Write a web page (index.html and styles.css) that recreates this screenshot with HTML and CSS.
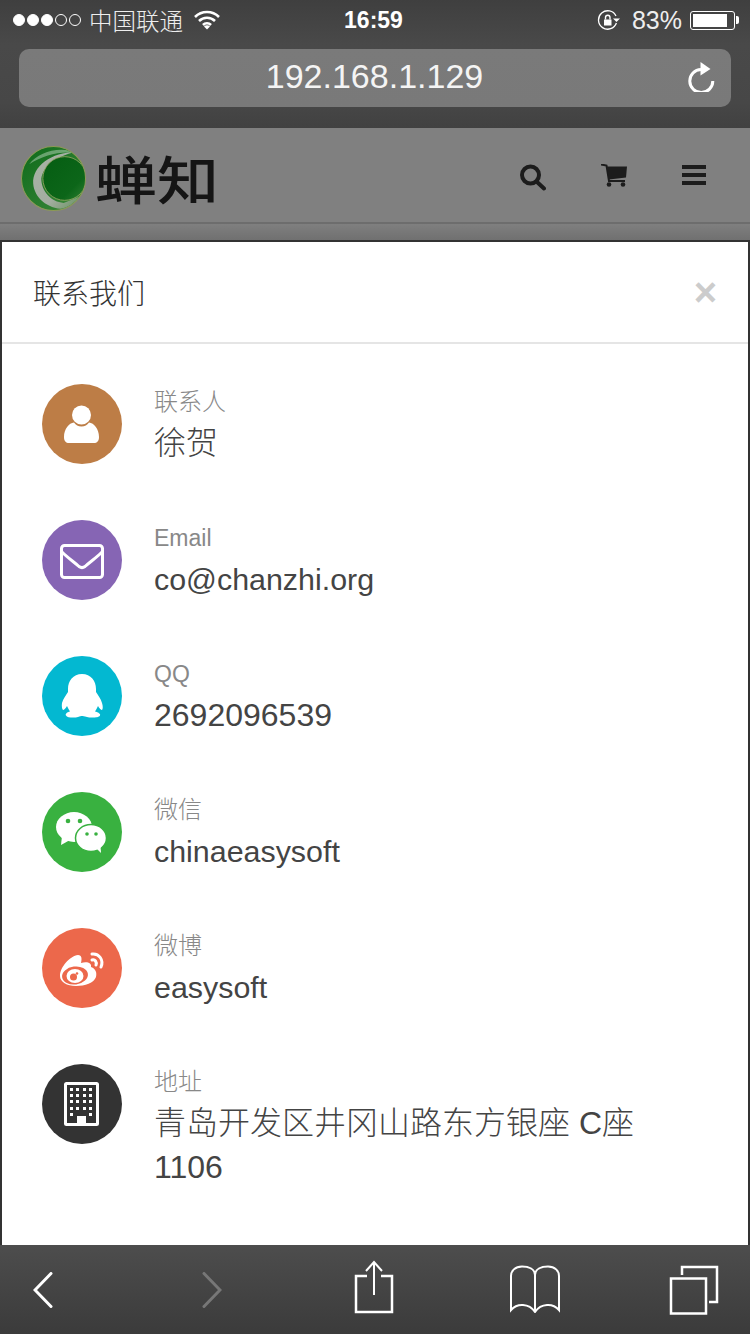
FILE: index.html
```html
<!DOCTYPE html>
<html>
<head>
	<title>联系我们</title>
	<meta charset="utf-8">
	<link rel="stylesheet" href="styles.css">
</head>

<body>
<div id="top">
	<div class="status">
		<div class="status-left">
			<i class="dot on"></i><i class="dot on"></i><i class="dot on"></i><i class="dot"></i><i class="dot"></i>
			<span class="carrier">中国联通</span>
			<svg class="wifi" width="26" height="20" viewBox="0 0 26 20"><path d="M1 7a17 17 0 0 1 24 0M5 11a11.500 11.500 0 0 1 16 0M9 15a5.500 5.500 0 0 1 8 0" fill="none" stroke="#fff" stroke-width="2.600"/><path d="M13 19.500l-3-3a4.200 4.200 0 0 1 6 0z" fill="#fff"/></svg>
		</div>
		<div class="time">16:59</div>
		<div class="status-right">
			<svg width="24" height="20" viewBox="0 0 24 20"><path d="M19 6a9.200 9.200 0 1 0 .4 7" fill="none" stroke="#fff" stroke-width="1.300"/><path d="M16 8.500h7l-3.500 3.500z" fill="#fff"/><path d="M7 9.500h7.500v6H7z" fill="#fff"/><path d="M8.500 9.500V7.500a2.200 2.200 0 0 1 4.500 0v2" fill="none" stroke="#fff" stroke-width="1.400"/></svg>
			<span class="percent">83%</span>
			<div class="battery"><b></b></div>
			<i class="nub"></i>
		</div>
	</div>
	<div class="addr">
		<span>192.168.1.129</span>
		<svg class="reload" width="28" height="30" viewBox="0 0 28 30"><path d="M14 7.500a11.500 11.500 0 1 0 11.800 11.500" fill="none" stroke="#fff" stroke-width="3"/><path d="M13.500 0l10 7-10 6.500z" fill="#fff"/></svg>
	</div>
</div>

<div class="site">
	<div class="site-head">
		<svg class="logo" width="65" height="65" viewBox="0 0 64 64">
			<defs>
				<linearGradient id="ball" x1="0" y1="0" x2="1" y2="1"><stop offset="0" stop-color="#0d6a1a"/><stop offset="1" stop-color="#3f8a3c"/></linearGradient>
				<linearGradient id="swirl" x1="0" y1="0" x2="1" y2="1"><stop offset="0" stop-color="#a9b3a6"/><stop offset=".6" stop-color="#a3ada0"/><stop offset="1" stop-color="#5f8f58"/></linearGradient>
				<linearGradient id="core" x1="0" y1="0" x2="1" y2="1"><stop offset="0" stop-color="#055d12"/><stop offset=".7" stop-color="#0c6619"/><stop offset="1" stop-color="#2f7f33"/></linearGradient>
				<clipPath id="round"><circle cx="32" cy="32" r="31"/></clipPath>
			</defs>
			<circle cx="32" cy="32" r="31.500" fill="url(#ball)" stroke="#8d9a55"/>
			<g clip-path="url(#round)">
				<path d="M54 6C30 6 11 20 12 37C13 51 26 62 42 62C52 62 59 56 62 48L42 56C30 55 20 45 20 32C22 20 34 10 54 6Z" fill="url(#swirl)"/>
				<circle cx="43" cy="32" r="21.500" fill="url(#core)" stroke="#9aa865" stroke-width=".8"/>
				<path d="M8 18C18 5 40-1 58 8C42 4 24 8 8 18Z" fill="#fff" fill-opacity=".35"/>
			</g>
		</svg>
		<span class="logo-text">蝉知</span>
		<div class="site-icons">
			<svg class="i-search" width="26" height="27" viewBox="0 0 26 27"><circle cx="10.500" cy="11" r="8.500" fill="none" stroke="#1c1c1c" stroke-width="4"/><path d="M16.500 17.500l7.500 7" stroke="#1c1c1c" stroke-width="4" stroke-linecap="round"/></svg>
			<svg width="26" height="23" viewBox="0 0 26 23"><path d="M0 .5L5.500 1.500L8 17H24" fill="none" stroke="#1c1c1c" stroke-width="2"/><path d="M5.500 2.500H26L25 13.500L8 15.500Z" fill="#1c1c1c"/><circle cx="8" cy="20.500" r="2.300" fill="#1c1c1c"/><circle cx="22" cy="20.500" r="2.300" fill="#1c1c1c"/></svg>
			<div class="burger"><i></i><i></i><i></i></div>
		</div>
	</div>
</div>

<div id="modal">
	<div class="modal-head">
		<h1>联系我们</h1>
		<span class="close">×</span>
	</div>
	<ul class="contacts">
		<li>
			<div class="ico brown">
				<svg width="80" height="80" viewBox="0 0 80 80"><circle cx="39.500" cy="31" r="9.500" fill="#fff"/><path d="M22 53C22 45 27 39 32 38.500C34 41 36 42.500 39.500 42.500C43 42.500 45 41 47 38.500C52 39 57 45 57 53C57 57 55 59 52 59H27C24 59 22 57 22 53Z" fill="#fff"/></svg>
			</div>
			<div class="info"><span class="label">联系人</span><p class="zh">徐贺</p></div>
		</li>
		<li>
			<div class="ico purple">
				<svg width="80" height="80" viewBox="0 0 80 80"><rect x="19.500" y="25.500" width="41" height="32" rx="3" fill="none" stroke="#fff" stroke-width="3"/><path d="M20 32C26 38 32 42 37 46.500C39 48 41 48 43 46.500C48 42 54 38 60 32" fill="none" stroke="#fff" stroke-width="3"/></svg>
			</div>
			<div class="info"><span class="label en">Email</span><p>co@chanzhi.org</p></div>
		</li>
		<li>
			<div class="ico cyan">
				<svg width="80" height="80" viewBox="0 0 80 80"><path d="M40 18C31 18 26 25 26 33L26 36C24 39 21 43 20 47C19.500 50 20 53 21 54C22 54 24 52 25 50C26 52 27 54 28 55.500C25 56 23 58 24 59.500C25 62 33 62 36 61C38 60 39 60 40 60C41 60 42 60 45 61C48 62 57 62 58 59.500C59 58 56 56 53 55.500C54 54 55 52 56 50C57 52 59 54 60 54C61 53 61 50 60 47C59 43 56 39 54 36L54 33C54 25 49 18 40 18Z" fill="#fff"/></svg>
			</div>
			<div class="info"><span class="label en">QQ</span><p class="num">2692096539</p></div>
		</li>
		<li>
			<div class="ico green">
				<svg width="80" height="80" viewBox="0 0 80 80"><ellipse cx="32" cy="35" rx="18" ry="15" fill="#fff"/><path d="M20 44l-1 9 9-5z" fill="#fff"/><circle cx="26" cy="29" r="2.300" fill="#39b140"/><circle cx="38" cy="29" r="2.300" fill="#39b140"/><ellipse cx="49" cy="46" rx="15.500" ry="13.500" fill="#fff" stroke="#39b140" stroke-width="1.500"/><path d="M54 56l5 5-.5-7z" fill="#fff"/><circle cx="45" cy="42" r="1.800" fill="#39b140"/><circle cx="54" cy="42" r="1.800" fill="#39b140"/></svg>
			</div>
			<div class="info"><span class="label">微信</span><p>chinaeasysoft</p></div>
		</li>
		<li>
			<div class="ico red">
				<svg width="80" height="80" viewBox="0 0 80 80"><path d="M18 48C18 39 28 28 36 27C40 27 40 31 39 35C45 33 50 35 49 39C54 41 55 45 54 49C52 55 43 58 34 58C25 58 18 54 18 48Z" fill="#fff"/><ellipse cx="33" cy="47.500" rx="13" ry="9" fill="#ec684b" transform="rotate(-8 33 47.500)"/><ellipse cx="33" cy="48" rx="8.500" ry="7" fill="#fff"/><circle cx="31.500" cy="49" r="3.500" fill="#ec684b"/><circle cx="35" cy="45.500" r="1.300" fill="#ec684b"/><path d="M50 26C57 25 62 32 59 39M50 32C53 31 55 34 54 37" fill="none" stroke="#fff" stroke-width="3" stroke-linecap="round"/></svg>
			</div>
			<div class="info"><span class="label">微博</span><p>easysoft</p></div>
		</li>
		<li>
			<div class="ico dark">
				<svg width="80" height="80" viewBox="0 0 80 80">
					<rect x="23.500" y="19.500" width="32" height="41" rx="1" fill="none" stroke="#fff" stroke-width="3"/>
					<g fill="#fff">
						<rect x="28" y="24" width="3" height="3"/><rect x="34" y="24" width="3" height="3"/><rect x="41" y="24" width="3" height="3"/><rect x="47" y="24" width="3" height="3"/>
						<rect x="28" y="30" width="3" height="3"/><rect x="34" y="30" width="3" height="3"/><rect x="41" y="30" width="3" height="3"/><rect x="47" y="30" width="3" height="3"/>
						<rect x="28" y="36" width="3" height="3"/><rect x="34" y="36" width="3" height="3"/><rect x="41" y="36" width="3" height="3"/><rect x="47" y="36" width="3" height="3"/>
						<rect x="28" y="43" width="3" height="3"/><rect x="34" y="43" width="3" height="3"/><rect x="41" y="43" width="3" height="3"/><rect x="47" y="43" width="3" height="3"/>
						<rect x="28" y="49" width="3" height="3"/><rect x="47" y="49" width="3" height="3"/>
						<rect x="35" y="52" width="9" height="7"/>
					</g>
				</svg>
			</div>
			<div class="info"><span class="label">地址</span><p class="zh">青岛开发区井冈山路东方银座 C座 1106</p></div>
		</li>
	</ul>
</div>

<div id="toolbar">
	<svg class="t-back" width="20" height="36" viewBox="0 0 20 36"><path d="M18 1.500L2 18l16 16.500" fill="none" stroke="#fff" stroke-width="3" stroke-linecap="round"/></svg>
	<svg class="t-next" width="20" height="36" viewBox="0 0 20 36"><path d="M2 1.500L18 18 2 34.500" fill="none" stroke="#777" stroke-width="3" stroke-linecap="round"/></svg>
	<svg class="t-share" width="40" height="54" viewBox="0 0 40 54"><path d="M13 16H2v36h36V16H27" fill="none" stroke="#fff" stroke-width="2.500"/><path d="M20 2v33M12 11l8-9 8 9" fill="none" stroke="#fff" stroke-width="2"/></svg>
	<svg class="t-book" width="52" height="48" viewBox="0 0 52 48"><path d="M26 10C26 4 20 1.500 13 1.500C6 1.500 2 6 2 11V45C8 38 20 38 26 47C32 38 44 38 50 45V11C50 6 46 1.500 39 1.500C32 1.500 26 4 26 10V47" fill="none" stroke="#fff" stroke-width="2"/></svg>
	<svg class="t-tabs" width="50" height="50" viewBox="0 0 50 50"><rect x="2" y="13.500" width="35" height="35" fill="none" stroke="#fff" stroke-width="2.500"/><path d="M13 10V2h35v35h-8" fill="none" stroke="#fff" stroke-width="2.500"/></svg>
</div>
</body>
</html>
```

FILE: styles.css
```css
html,body {
	margin:0;
	padding:0;
}
body {
	width:750px;
	height:1334px;
	overflow:hidden;
	display:flex;
	flex-direction:column;
	background:#fff;
	font-family:"Liberation Sans","Noto Sans CJK SC",sans-serif;
}
ul {
	list-style:none;
	margin:0;
	padding:0;
}
h1,p {
	margin:0;
	font-weight:normal;
}

/* browser top */
#top {
	height:128px;
	background:linear-gradient(#3f3f3f,#494949 35%,#474747 80%,#414141);
	color:#fff;
}
.status {
	height:40px;
	padding:0 11px 0 13px;
	display:grid;
	grid-template-columns:1fr auto 1fr;
	align-items:center;
}
.status-left,.status-right {
	display:flex;
	align-items:center;
}
.status-right {
	justify-content:flex-end;
}
.dot {
	width:10px;
	height:10px;
	margin-right:2px;
	border:1px solid #fff;
	border-radius:50%;
}
.dot.on {
	background:#fff;
}
.carrier {
	margin-left:6px;
	font-size:23.500px;
	font-weight:300;
	color:#eee;
}
.wifi {
	margin-left:11px;
}
.time {
	margin-right:5px;
	font-size:23px;
	font-weight:bold;
}
.percent {
	margin:0 8px 0 11px;
	font-size:25px;
	color:#eee;
}
.battery {
	width:45px;
	height:19px;
	box-sizing:border-box;
	padding:2px;
	border:1px solid #fff;
	border-radius:3px;
}
.battery b {
	display:block;
	width:34px;
	height:100%;
	background:#fff;
}
.nub {
	width:3px;
	height:8px;
	margin-left:1px;
	background:#fff;
	border-radius:0 2px 2px 0;
}
.addr {
	position:relative;
	height:58px;
	margin:9px 19px 0;
	border-radius:10px;
	background:linear-gradient(#7a7a7a,#797979);
	display:flex;
	align-items:center;
	justify-content:center;
	font-size:34px;
	color:#f4f4f4;
}
.addr span {
	margin:-3px 0 0 -1px;
}
.reload {
	position:absolute;
	top:13px;
	right:16px;
}

/* page behind the dialog */
.site {
	height:112px;
	background:linear-gradient(#808080 85%,#707070);
}
.site-head {
	height:94px;
	padding-left:21px;
	border-bottom:2px solid #6d6d6d;
	display:flex;
	align-items:center;
}
.logo {
	margin-top:7px;
}
.logo-text {
	margin:13px 0 0 9px;
	font-size:62px;
	line-height:64px;
	font-weight:500;
	color:#151515;
	transform:scaleY(.84);
}
.site-icons {
	margin-left:auto;
	margin-right:44px;
	display:flex;
	align-items:center;
	gap:55px;
}
.i-search {
	margin-top:4px;
}
.burger {
	width:24px;
}
.burger i {
	display:block;
	height:4px;
	margin:4px 0;
	background:#1c1c1c;
}

/* dialog */
#modal {
	flex:1;
	min-height:0;
	box-sizing:border-box;
	border:2px solid #333;
	border-bottom:0;
	background:#fff;
}
.modal-head {
	height:102px;
	padding:0 31px 1px 31px;
	box-sizing:border-box;
	border-bottom:2px solid #e5e5e5;
	display:flex;
	align-items:center;
	justify-content:space-between;
}
.modal-head h1 {
	font-size:28px;
	font-weight:300;
	color:#333;
}
.close {
	font-size:40px;
	font-weight:bold;
	color:#ccc;
	margin-top:1px;
}
.contacts {
	padding:40px 0 0 40px;
}
.contacts li {
	display:flex;
	gap:32px;
	height:80px;
	margin-bottom:56px;
}
.ico {
	flex:none;
	width:80px;
	height:80px;
	border-radius:50%;
}
.ico svg {
	display:block;
}
.brown { background:#bd7d46; }
.purple { background:#8665b4; }
.cyan { background:#03b8d1; }
.green { background:#39b140; }
.red { background:#ec684b; }
.dark { background:#333; }
.info {
	width:510px;
}
.label {
	display:block;
	height:37px;
	line-height:36px;
	font-size:24px;
	font-weight:300;
	color:#888;
}
.label.en {
	font-size:23px;
}
.info p {
	font-size:30.400px;
	line-height:44px;
	color:#444;
}
.info p.zh,.info p.num {
	font-size:32px;
}
.info p.zh {
	font-weight:300;
}

/* browser bottom */
#toolbar {
	height:89px;
	background:linear-gradient(#4d4d4d,#3b3b3b);
	display:flex;
	align-items:flex-start;
	padding-left:33px;
}
.t-back { margin-top:27px; }
.t-next { margin-top:27px; margin-left:149px; }
.t-share { margin-top:15px; margin-left:132px; }
.t-book { margin-top:20px; margin-left:115px; }
.t-tabs { margin-top:20px; margin-left:108px; }
```
